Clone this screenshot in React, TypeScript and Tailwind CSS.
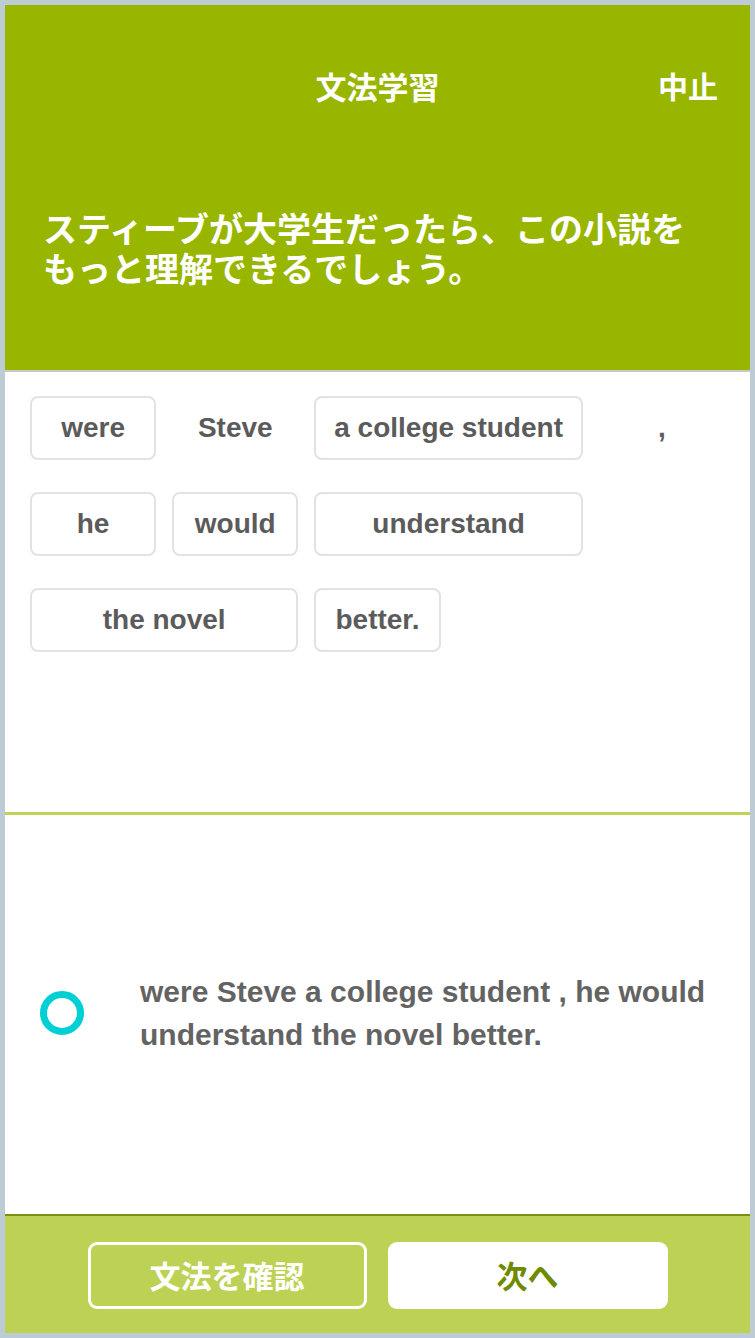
import React from "react";

type Tile = {
  text: string;
  span: 1 | 2;
  bordered: boolean;
};

const rows: Tile[][] = [
  [
    { text: "were", span: 1, bordered: true },
    { text: "Steve", span: 1, bordered: false },
    { text: "a college student", span: 2, bordered: true },
    { text: ",", span: 1, bordered: false },
  ],
  [
    { text: "he", span: 1, bordered: true },
    { text: "would", span: 1, bordered: true },
    { text: "understand", span: 2, bordered: true },
  ],
  [
    { text: "the novel", span: 2, bordered: true },
    { text: "better.", span: 1, bordered: true },
  ],
];

const jpFont = "font-['Noto_Sans_CJK_JP','Noto_Sans',sans-serif]";
const enFont = "font-['Liberation_Sans',Arial,sans-serif]";

function WordTile({ tile }: { tile: Tile }) {
  return (
    <div
      className={`flex h-[64px] items-center justify-center rounded-[8px] text-[28px] font-bold text-[#5b5b5b] ${
        tile.span === 2 ? "col-span-2" : "col-span-1"
      } ${tile.bordered ? "border-2 border-[#e2e2e2]" : "border-2 border-transparent"}`}
    >
      {tile.text}
    </div>
  );
}

export default function App() {
  return (
    <div className="flex h-[1338px] w-[755px] flex-col bg-[#bccbd4] p-[5px]">
      <div className="flex flex-1 flex-col overflow-hidden bg-white">
        {/* header */}
        <header className={`flex h-[365px] flex-col bg-[#98b500] text-white ${jpFont}`}>
          <div className="relative mt-[50px] flex h-[60px] items-center justify-center">
            <h1 className="text-[31px] font-bold leading-none">文法学習</h1>
            <button className="absolute right-[32px] top-1/2 -translate-y-1/2 text-[30px] font-bold leading-none">
              中止
            </button>
          </div>
          <div className="mt-[92px] flex flex-col pl-[38px] pr-[20px] text-[34px] font-semibold leading-[42px]">
            <span className="-mb-[2px]">スティーブが大学生だったら、この小説を</span>
            <span>もっと理解できるでしょう。</span>
          </div>
        </header>

        {/* word tiles */}
        <section className={`h-[442px] border-t-2 border-[#c8c8c8] px-[25px] pt-[24px] ${enFont}`}>
          <div className="flex flex-col gap-[32px]">
            {rows.map((row, index) => (
              <div className="grid grid-cols-5 gap-x-[16px]" key={index}>
                {row.map((tile) => (
                  <WordTile key={tile.text} tile={tile} />
                ))}
              </div>
            ))}
          </div>
        </section>

        {/* answer */}
        <section className={`flex flex-1 items-center border-t-[3px] border-[#bfd356] pb-[4px] ${enFont}`}>
          <div className="ml-[35px] h-[44px] w-[44px] shrink-0 rounded-full border-[7px] border-[#00cfd3]" />
          <p className="ml-[56px] pr-[18px] text-[30px] font-bold leading-[43px] text-[#636363]">
            were Steve a college student , he would understand the novel better.
          </p>
        </section>

        {/* footer */}
        <footer
          className={`flex h-[119px] items-start justify-center gap-[21px] border-t-2 border-[#7a9010] bg-[#bdd254] pt-[26px] ${jpFont}`}
        >
          <button className="flex h-[67px] w-[279px] items-center justify-center rounded-[9px] border-[3px] border-white text-[31px] font-bold text-white">
            文法を確認
          </button>
          <button className="flex h-[67px] w-[280px] items-center justify-center rounded-[9px] bg-white text-[31px] font-bold text-[#6e8a00]">
            次へ
          </button>
        </footer>
      </div>
    </div>
  );
}
